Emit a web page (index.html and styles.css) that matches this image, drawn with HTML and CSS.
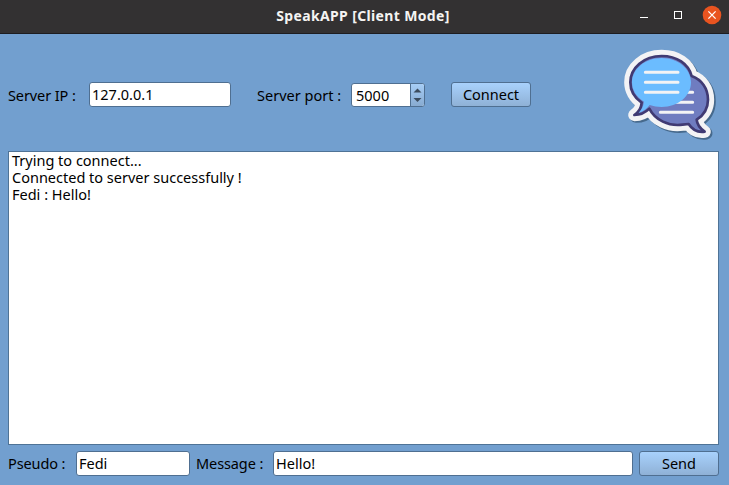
FILE: index.html
```html
<!DOCTYPE html>
<html lang="en">
<head>
<meta charset="utf-8">
<title>SpeakAPP [Client Mode]</title>
<link rel="stylesheet" href="styles.css">
</head>
<body>
<header class="titlebar">
  <h1 class="title">SpeakAPP [Client Mode]</h1>
  <div class="controls">
    <svg width="86" height="20" viewBox="0 0 86 20">
      <path d="M4 12.5h8" stroke="#fff"/>
      <rect x="38.5" y="6.5" width="7" height="7" fill="none" stroke="#fff"/>
      <circle cx="76" cy="10" r="9.3" fill="#e95420"/>
      <path d="M72.4 6.4l7.2 7.2M79.6 6.4l-7.2 7.2" stroke="#fff" stroke-width="1.3"/>
    </svg>
  </div>
</header>
<main class="window">
  <section class="connection">
    <span class="label label-ip">Server IP :</span>
    <div class="field field-ip">127.0.0.1</div>
    <span class="label label-port">Server port :</span>
    <div class="spin">
      <span class="spin-value">5000</span>
      <div class="spin-buttons">
        <svg width="13" height="22" viewBox="0 0 13 22"><path d="M2.5 8.5L6.5 4.5l4 4zM2.5 14h8l-4 4z" fill="#3c4c5e"/></svg>
      </div>
    </div>
    <div class="button connect">Connect</div>
    <svg class="logo" width="95" height="93" viewBox="39 27 285 279">
      <defs>
        <path id="outline" d="M155 48C102 48 61 83 61 127C61 151 74 174 95 188C94 203 87 216 73 225C90 225 106 218 118 206C135 240 176 260 218 254L236 252C246 268 262 278 284 275C270 265 261 253 260 239C282 225 294 204 294 179C294 145 275 119 245 108C235 71 201 48 155 48Z"/>
      </defs>
      <use href="#outline" x="5" y="5" fill="#46698c" stroke="#46698c" stroke-width="37" stroke-linejoin="round"/>
      <use href="#outline" fill="#f3f3f5" stroke="#f3f3f5" stroke-width="37" stroke-linejoin="round"/>
      <use href="#outline" fill="#6f7cc0" stroke="#403a73" stroke-width="8" stroke-linejoin="round"/>
      <path d="M151 217h97M180 187h68M210 157h38" stroke="#f3f3f5" stroke-width="9" stroke-linecap="round"/>
      <path d="M155 54C105 54 66 87 66 127C66 150 79 172 102 185C100 199 95 209 86 218C100 214 111 206 119 195C130 199 142 201 155 201C205 201 243 168 243 127C243 87 205 54 155 54Z" fill="#6bbcff"/>
      <path d="M106 97h98M106 127h98M106 157h98" stroke="#f3f3f5" stroke-width="9" stroke-linecap="round"/>
    </svg>
  </section>
  <section class="log">
    <p class="line">Trying to connect...</p>
    <p class="line">Connected to server successfully !</p>
    <p class="line">Fedi : Hello!</p>
  </section>
  <section class="composer">
    <span class="label label-pseudo">Pseudo :</span>
    <div class="field field-pseudo">Fedi</div>
    <span class="label label-message">Message :</span>
    <div class="field field-message">Hello!</div>
    <div class="button">Send</div>
  </section>
</main>
</body>
</html>
```
FILE: styles.css
```css
* { box-sizing: border-box; }
body {
  margin: 0;
  width: 729px;
  height: 485px;
  overflow: hidden;
  background: #729fcf;
  color: #000;
  font: 14.5px/17px "Noto Sans", sans-serif;
  white-space: nowrap;
}
.titlebar {
  display: grid;
  grid-template-columns: 1fr auto 1fr;
  height: 34px;
  padding: 5px 3px 0 0;
  background: #333132;
  border-bottom: 1px solid #1d1d21;
}
.title {
  grid-column: 2;
  margin: 2px 0 0;
  color: #f5f4f2;
  font-size: 14px;
  line-height: 17px;
  font-weight: 700;
  letter-spacing: 0.36px;
}
.controls { justify-self: end; height: 20px; padding-right: 4px; }
.controls svg { display: block; }
.window { height: 451px; padding: 0 10px 9px 8px; }
.connection { display: flex; align-items: flex-start; height: 117px; }
.label { flex: none; letter-spacing: -0.1px; }
.connection .label { margin-top: 53px; }
.label-ip { width: 81px; }
.field {
  flex: none;
  height: 25px;
  padding: 3px 2px;
  background: #fff;
  border: 1px solid #4f6f91;
  border-radius: 3px;
}
.field-ip { width: 142px; margin: 48px 26px 0 0; }
.connection .label-port { width: 94px; letter-spacing: 0.02px; }
.spin {
  display: flex;
  flex: none;
  width: 74px;
  height: 24px;
  margin: 49px 26px 0 0;
  overflow: hidden;
  background: #fff;
  border: 1px solid #4f6f91;
  border-radius: 3px;
}
.spin-value { flex: 1; padding: 3px 0 0 4px; }
.spin-buttons {
  width: 14px;
  background: linear-gradient(#a6cdf6, #88abd1);
  border-left: 1px solid #4f6f91;
}
.spin-buttons svg { display: block; }
.button {
  flex: none;
  width: 80px;
  height: 25px;
  padding-top: 3px;
  background: linear-gradient(#a8d1fc, #8fb1d6);
  border: 1px solid #4f6f91;
  border-radius: 3px;
  text-align: center;
}
.connect { margin: 48px 92px 0 0; }
.logo { flex: none; margin-top: 15px; }
.log {
  height: 294px;
  padding: 0 3px;
  background: #fff;
  border: 1px solid #4f7396;
}
.line { margin: 0; }
.composer { display: flex; padding-top: 6px; }
.composer .label { margin-top: 4px; }
.label-pseudo { width: 68px; }
.field-pseudo { width: 114px; margin-right: 6px; }
.label-message { width: 77px; }
.field-message { width: 360px; margin-right: 6px; }
```
